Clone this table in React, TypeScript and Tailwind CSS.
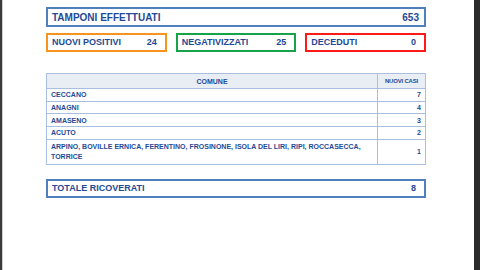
const rows = [
  { comune: "CECCANO", casi: 7 },
  { comune: "ANAGNI", casi: 4 },
  { comune: "AMASENO", casi: 3 },
  { comune: "ACUTO", casi: 2 },
  {
    comune: "ARPINO, BOVILLE ERNICA, FERENTINO, FROSINONE, ISOLA DEL LIRI, RIPI, ROCCASECCA, TORRICE",
    casi: 1,
  },
];

const stats = [
  { label: "NUOVI POSITIVI", value: 24, border: "border-[#f7941d]" },
  { label: "NEGATIVIZZATI", value: 25, border: "border-[#16a34a]" },
  { label: "DECEDUTI", value: 0, border: "border-[#ff1a1a]" },
];

function StatBox({ label, value, border }: { label: string; value: number; border: string }) {
  return (
    <div className={`flex items-center justify-between border-2 ${border} h-[19px] pl-[4px] pr-[8px]`}>
      <span>{label}</span>
      <span>{value}</span>
    </div>
  );
}

export default function App() {
  return (
    <div className="flex w-[480px] h-[270px] bg-white overflow-hidden font-['Liberation_Sans',Arial,sans-serif] font-bold text-[#1f4a96]">
      <div className="w-[2px] bg-[#3a3a3a]" />
      <div className="w-px bg-[#d0d0d0]" />
      <div className="flex-1 pl-[43px] pr-[48px] pt-[7px]">
        <div className="flex items-center justify-between border-2 border-[#4f7fbd] h-[20px] pl-[4px] pr-[5px] text-[10px]">
          <span>TAMPONI EFFETTUATI</span>
          <span>653</span>
        </div>

        <div className="grid grid-cols-3 gap-[9px] mt-[6px] text-[9px]">
          {stats.map((s) => (
            <StatBox key={s.label} {...s} />
          ))}
        </div>

        <table className="w-full mt-[21px] border-collapse text-[7px] leading-[9px]">
          <thead>
            <tr className="bg-[#e9edf4] h-[15px]">
              <th className="border border-[#a9bfdf] text-center">COMUNE</th>
              <th className="border border-[#a9bfdf] w-[48px] text-center text-[6px] tracking-[-0.2px]">NUOVI CASI</th>
            </tr>
          </thead>
          <tbody>
            {rows.map((r, i) => (
              <tr key={r.comune} className="h-[12.7px]">
                <td
                  className={`border border-[#a9bfdf] px-[4px] text-left ${
                    i === rows.length - 1 ? "py-[2px] leading-[10px]" : "py-0"
                  }`}
                >
                  {r.comune}
                </td>
                <td className="border border-[#a9bfdf] pr-[4px] py-0 text-right">{r.casi}</td>
              </tr>
            ))}
          </tbody>
        </table>

        <div className="flex items-center justify-between border-2 border-[#4f7fbd] h-[19px] mt-[14px] pl-[4px] pr-[8px] text-[9px]">
          <span>TOTALE RICOVERATI</span>
          <span>8</span>
        </div>
      </div>
      <div className="w-[6px] bg-[#2b2b2b]" />
    </div>
  );
}
